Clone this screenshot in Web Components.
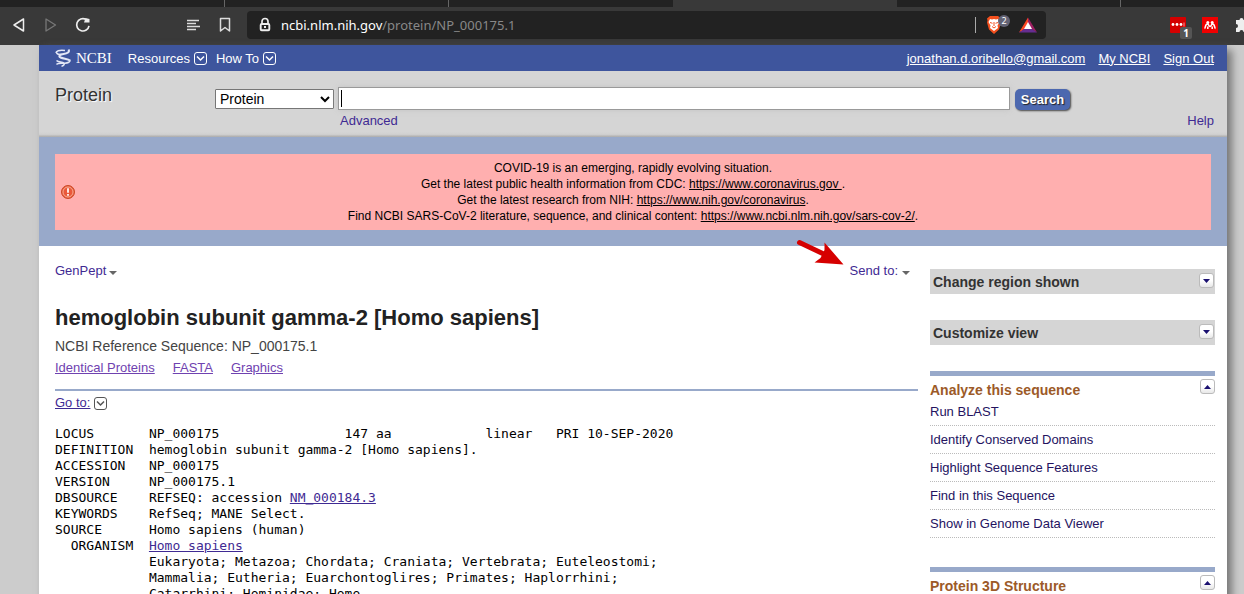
<!DOCTYPE html>
<html lang="en">
<head>
<meta charset="utf-8">
<title>hemoglobin subunit gamma-2 [Homo sapiens] - Protein - NCBI</title>
<style>
  html, body { margin: 0; }
  body { height: 100vh; display: flex; flex-direction: column; overflow: hidden; background: #ccc; font-family: "Liberation Sans", Arial, sans-serif; font-size: 13px; color: #222; }
  browser-bar { flex: none; }
  ncbi-page { flex: 1; min-height: 0; }
</style>
</head>
<body>
<browser-bar></browser-bar>
<ncbi-page>
  <ncbi-header></ncbi-header>
  <ncbi-search></ncbi-search>
  <ncbi-alert></ncbi-alert>
  <protein-record></protein-record>
  <side-panel kind="bar" heading="Change region shown" slot="side"></side-panel>
  <side-panel kind="bar" heading="Customize view" slot="side"></side-panel>
  <side-panel kind="open" heading="Analyze this sequence" slot="side">
    <side-link>Run BLAST</side-link>
    <side-link>Identify Conserved Domains</side-link>
    <side-link>Highlight Sequence Features</side-link>
    <side-link>Find in this Sequence</side-link>
    <side-link>Show in Genome Data Viewer</side-link>
  </side-panel>
  <side-panel kind="open" heading="Protein 3D Structure" slot="side"></side-panel>
</ncbi-page>

<script>
function define(name, html, after) {
  const tpl = document.createElement('template');
  tpl.innerHTML = html;
  customElements.define(name, class extends HTMLElement {
    constructor() {
      super();
      this.attachShadow({ mode: 'open' }).append(tpl.content.cloneNode(true));
    }
    connectedCallback() { if (after) after(this, this.shadowRoot); }
  });
}

define('browser-bar', `
<style>
  :host { display: block; background: #393939; overflow: hidden; }
  .tabs { display: grid; grid-auto-flow: column; grid-auto-columns: 224px; height: 7px; padding-left: 1px; background: #222; }
  .tabs i { border-right: 1px solid #666; }
  .tabs i.quiet { border-color: transparent; }
  .tabs i.on { background: #393939; border-color: #393939; }
  .tools { display: flex; align-items: center; height: 38px; padding: 0 0 2px 3px; box-sizing: border-box; }
  button { flex: none; display: flex; align-items: center; justify-content: center; width: 32px; height: 28px; padding: 0; border: 0; background: none; position: relative; }
  svg { flex: none; display: block; }
  .read { margin-left: 78px; }
  .omni { flex: 1; min-width: 0; display: flex; align-items: center; height: 28px; margin: 0 116px 0 6px; padding: 0 1px 0 10px; background: #222; border-radius: 4px; box-sizing: border-box; }
  .omni button { width: 34px; }
  .url { flex: 1; min-width: 0; margin-left: 8px; white-space: nowrap; overflow: hidden; font: 13px/20px "Noto Sans", sans-serif; color: #888; }
  .url b { font-weight: 400; color: #fff; }
  .sep { width: 1px; height: 16px; background: #aaa; margin-right: 1px; }
  .num { position: absolute; left: 21px; top: 4px; width: 12px; height: 12px; border-radius: 6px; background: #636375; color: #fff; font: 9px/12px "Noto Sans", sans-serif; text-align: center; }
  .one { position: absolute; left: 18px; top: 16px; width: 12px; height: 12px; border-radius: 2px; background: #555; color: #fff; font: bold 10px/12px "Noto Sans", sans-serif; text-align: center; }
  .puzzle { width: 18px; justify-content: flex-start; padding-left: 8px; }
</style>
<div class="tabs"><i></i><i></i><i class="quiet"></i><i class="on"></i><i></i><i></i></div>
<div class="tools">
  <button aria-label="Back"><svg width="14" height="16" viewBox="0 0 14 16"><path d="M11.500 2v12L2 8z" fill="none" stroke="#eee" stroke-width="1.500" stroke-linejoin="round"/></svg></button>
  <button aria-label="Forward"><svg width="14" height="16" viewBox="0 0 14 16"><path d="M2 2v12l9.500-6z" fill="none" stroke="#777" stroke-width="1.300" stroke-linejoin="round"/></svg></button>
  <button aria-label="Reload"><svg width="16" height="16" viewBox="0 0 16 16"><path d="M10.800 2.300A6.200 6.200 0 1 0 14 8.800" fill="none" stroke="#eee" stroke-width="1.700"/><path d="m9 5.500 1.500-4.500 4 1v3.500z" fill="#eee"/></svg></button>
  <button class="read" aria-label="Reader"><svg width="14" height="14" viewBox="0 0 14 14"><path d="M1 2.500h12M1 5.500h9M1 8.500h13M1 11.500h9" stroke="#ddd" stroke-width="1.300"/></svg></button>
  <button aria-label="Bookmark"><svg width="12" height="16" viewBox="0 0 12 16"><path d="M1.500 1.500h9v12.500L6 10.500 1.500 14z" fill="none" stroke="#ddd" stroke-width="1.500" stroke-linejoin="round"/></svg></button>
  <div class="omni">
    <svg width="16" height="16" viewBox="0 0 16 16"><path d="M5 7V4.500a3 3 0 0 1 6 0V7" fill="none" stroke="#eee" stroke-width="1.700"/><rect x="3.700" y="7" width="8.600" height="6.200" rx="1" fill="none" stroke="#eee" stroke-width="1.900"/><rect x="7" y="9" width="2" height="2" fill="#eee"/></svg>
    <div class="url" role="textbox" aria-label="Address"><b>ncbi.nlm.nih.gov</b>/protein/NP_000175.1</div>
    <i class="sep"></i>
    <button aria-label="Shields"><svg width="16" height="18" viewBox="0 0 16 18"><path d="M4 0h8l3 2.500-.5 2 .5 2-2 7L8 18l-5-4.500L1 6.500l.5-2-.5-2z" fill="#f4501e"/><path d="m4 3 2 .5L8 3l2 .5 2-.5 1.500 3-2 3.500.5 2.500L8 15l-4-3 .5-2.500-2-3.500z" fill="#fff"/><path d="m4 6.500 2.500.8M12 6.500l-2.500.8M6 10.500 8 12l2-1.500M8 6v4" stroke="#f4501e" fill="none"/></svg><span class="num">2</span></button>
    <button aria-label="Rewards"><svg width="18" height="16" viewBox="0 0 18 16"><path d="M9 .5 0 15.500l9-5z" fill="#ff4724"/><path d="M9 .5 18 15.500 9 10z" fill="#9e1f63"/><path d="M0 15.500h18l-5-3.500H5z" fill="#662d91"/><path d="m9 5-4 7h8z" fill="#fff"/></svg></button>
  </div>
  <button aria-label="Passwords"><svg width="16" height="16" viewBox="0 0 16 16"><rect width="16" height="16" rx="1" fill="#d40000"/><circle cx="3" cy="7.500" r="1.400" fill="#fff"/><circle cx="7" cy="7.500" r="1.400" fill="#fff"/><circle cx="11" cy="7.500" r="1.400" fill="#fff"/><path d="M14 5.500v4" stroke="#f99"/></svg><span class="one">1</span></button>
  <button aria-label="Mendeley"><svg width="16" height="16" viewBox="0 0 16 16"><rect width="16" height="16" fill="#f00000"/><circle cx="5.800" cy="5.500" r="1.500" fill="#fff"/><circle cx="10.200" cy="5.500" r="1.500" fill="#fff"/><path d="M2.500 11.500c1.200-.5.500-4.500 3-4.500 1.500 0 1 2.500 2.500 2.500S9 7 10.500 7c2.500 0 1.800 4 3 4.500M5.800 9.500v2.500M10.200 9.500v2.500" fill="none" stroke="#fff" stroke-width="1.500"/></svg></button>
  <button class="puzzle" aria-label="Extensions"><svg width="18" height="16" viewBox="0 0 18 16"><path d="M2 3h3.500a2 2 0 0 1 4 0H13v4a2 2 0 0 1 0 4v4H9.500a2 2 0 0 0-4 0H2v-4a2 2 0 0 0 0-4z" fill="#eee"/></svg></button>
</div>`);

define('ncbi-page', `
<style>
  :host { display: block; padding: 0 17px 0 39px; }
  .sheet { background: #fff; min-height: 100%; box-shadow: 5px 5px 8px #777; }
  .cols { display: grid; grid-template-columns: minmax(0, 1fr) 285px; gap: 12px; padding: 0 12px 0 16px; }
  .side { padding-top: 23px; }
  .side ::slotted(*) { margin-bottom: 26px; }
</style>
<div class="sheet">
  <slot name="top"></slot>
  <main class="cols"><slot name="main"></slot><aside class="side"><slot name="side"></slot></aside></main>
</div>`);

define('ncbi-header', `
<style>
  :host { display: flex; align-items: center; height: 26px; padding: 0 13px 0 16px; background: #3e559d; color: #fff; font-size: 13px; }
  a { color: #fff; }
  .logo { display: flex; align-items: center; gap: 4px; margin-right: 16px; font: 15px/24px "Liberation Serif", serif; text-decoration: none; }
  .logo svg { display: block; }
  nav { display: flex; gap: 9px; flex: 1; }
  button { display: flex; align-items: center; gap: 4px; padding: 0; border: 0; background: none; color: #fff; font: inherit; }
  .user { display: flex; gap: 13px; }
</style>
<a class="logo" href="#"><svg width="17" height="18" viewBox="0 0 17 18" fill="none" stroke="#e4e8f6"><path d="M13.500.5c1.500 2.500-1 4-5 4.500C5 5.400 3 7 5.500 8.500 9 10 13 9.500 15 11.500" stroke-width="2"/><path d="M1 4c0-2 3-3.200 9-2.500M1.500 4c1 1.500 3 1.500 5 1.500M15 11c.5 2-2 3-5 3.200-4 .3-7.500-.2-8.500 1.300M1.500 11.500C4 14 7 12 9 14c.8 1.500-.5 3-2.500 3.200" stroke-width="1.500"/></svg>NCBI</a>
<nav>
  <button>Resources <drop-mark></drop-mark></button>
  <button>How To <drop-mark></drop-mark></button>
</nav>
<div class="user"><a href="#">jonathan.d.oribello@gmail.com</a><a href="#">My NCBI</a><a href="#">Sign Out</a></div>`, el => { el.slot = 'top'; });

define('drop-mark', `
<style>:host { display: inline-block; width: 13px; height: 13px; } svg { display: block; }</style>
<svg width="13" height="13" viewBox="0 0 13 13" fill="none" stroke="currentColor"><rect x=".5" y=".5" width="12" height="12" rx="2.500"/><path d="M3 4.500 6.500 8 10 4.500" stroke-width="1.500"/></svg>`);

define('ncbi-search', `
<style>
  :host { display: block; background: linear-gradient(#d5d5d5 92%, #d0d0d0 96%, #aaa); padding: 16px 13px 5px 16px; height: 66px; box-sizing: border-box; }
  form { display: grid; grid-template-columns: 160px 119px minmax(0, 1fr) 55px; align-items: center; width: calc(100% - 144px); }
  h2 { margin: 0; font: 18px/16px "Liberation Sans", sans-serif; color: #333; text-shadow: 1px 1px 1px #fff; align-self: start; }
  select { height: 20px; margin: 0; padding: 0; border: 1px solid #767676; border-radius: 1px; background: #fff; color: #000; font: 14px "Liberation Sans", sans-serif; }
  input { min-width: 0; height: 23px; margin: 0 5px 0 4px; padding: 0 4px; border: 1px solid #999; box-sizing: border-box; background: linear-gradient(#000, #000) 2px 2px / 1px 17px no-repeat #fff; font: 14px "Liberation Sans", sans-serif; box-shadow: 0 0 6px #c4c4c4; }
  button { height: 21px; padding: 0; border: 0; border-radius: 5px; background: #4c68af; color: #fff; font: bold 13px "Liberation Sans", sans-serif; box-shadow: 1px 1px 2px #444; text-shadow: 1px 1px 1px #222; align-self: end; }
  .links { display: flex; justify-content: space-between; padding-left: 285px; line-height: 16px; margin-top: 3px; }
  a { color: #3f2a93; text-decoration: none; }
</style>
<form onsubmit="return false">
  <h2>Protein</h2>
  <select aria-label="Database"><option>Protein</option></select>
  <input type="text" aria-label="Search term">
  <button>Search</button>
</form>
<div class="links"><a href="#">Advanced</a><a href="#">Help</a></div>`, el => { el.slot = 'top'; });

define('ncbi-alert', `
<style>
  :host { display: block; background: #98a9ca; padding: 17px 16px 16px; }
  .box { display: flex; align-items: center; background: #ffafaf; color: #000; padding: 6px 20px 6px 6px; font-size: 12px; line-height: 16px; }
  p { margin: 0; flex: 1; text-align: center; }
  a { color: #000; }
</style>
<div class="box">
  <svg width="14" height="14" viewBox="0 0 14 14"><circle cx="7" cy="7" r="6.500" fill="#e9583a" stroke="#c94a26"/><circle cx="7" cy="7" r="5" fill="none" stroke="#f9c0a8" stroke-width=".8"/><path d="M7 3.200v4.600M7 9v1.700" stroke="#fff" stroke-width="1.700"/></svg>
  <p>COVID-19 is an emerging, rapidly evolving situation.<br>
  Get the latest public health information from CDC: <a href="#">https://www.coronavirus.gov&nbsp;</a>.<br>
  Get the latest research from NIH: <a href="#">https://www.nih.gov/coronavirus</a>.<br>
  Find NCBI SARS-CoV-2 literature, sequence, and clinical content: <a href="#">https://www.ncbi.nlm.nih.gov/sars-cov-2/</a>.</p>
</div>`, el => { el.slot = 'top'; });

define('protein-record', `
<style>
  :host { display: block; padding-top: 17px; }
  .top { display: flex; justify-content: space-between; line-height: 16px; padding-right: 8px; }
  .menu { display: flex; align-items: center; gap: 3px; padding: 0; border: 0; background: none; color: #3f2a93; font: 13px/16px "Liberation Sans", sans-serif; position: relative; }
  .menu i { border: 4px solid transparent; border-top: 4px solid #666; border-bottom: 0; margin-top: 3px; }
  .menu.send { gap: 4px; }
  .pointer { position: absolute; left: -54px; top: -25px; pointer-events: none; }
  h1 { margin: 26px 0 0; font: bold 22px/26px "Liberation Sans", sans-serif; color: #222; }
  .ref { margin: 6px 0 0; font-size: 14px; line-height: 18px; color: #444; }
  .links { display: flex; gap: 18px; line-height: 16px; padding: 5px 0 13px; border-bottom: 2px solid #98a9ca; }
  .links a { color: #6f42b0; }
  .goto { display: flex; align-items: center; gap: 4px; line-height: 16px; padding: 4px 0 15px; color: #555; }
  .goto a, pre a { color: #3f2a93; }
  pre { margin: 0; font: 13px/16px "DejaVu Sans Mono", monospace; color: #000; }
</style>
<div class="top">
  <button class="menu">GenPept<i></i></button>
  <button class="menu send">Send to: <i></i>
    <svg class="pointer" width="50" height="30" viewBox="0 0 50 30" fill="#d60000"><path d="M3.500 4.500 33 18.500" stroke="#d60000" stroke-width="5" stroke-linecap="round"/><path d="M47.500 26.500 28.500 4.500 28.500 12 24.500 20 18.500 24.500z"/></svg>
  </button>
</div>
<h1>hemoglobin subunit gamma-2 [Homo sapiens]</h1>
<p class="ref">NCBI Reference Sequence: NP_000175.1</p>
<div class="links"><a href="#">Identical Proteins</a><a href="#">FASTA</a><a href="#">Graphics</a></div>
<div class="goto"><a href="#">Go to:</a><drop-mark></drop-mark></div>
<pre>LOCUS       NP_000175                147 aa            linear   PRI 10-SEP-2020
DEFINITION  hemoglobin subunit gamma-2 [Homo sapiens].
ACCESSION   NP_000175
VERSION     NP_000175.1
DBSOURCE    REFSEQ: accession <a href="#">NM_000184.3</a>
KEYWORDS    RefSeq; MANE Select.
SOURCE      Homo sapiens (human)
  ORGANISM  <a href="#">Homo sapiens</a>
            Eukaryota; Metazoa; Chordata; Craniata; Vertebrata; Euteleostomi;
            Mammalia; Eutheria; Euarchontoglires; Primates; Haplorrhini;
            Catarrhini; Hominidae; Homo.</pre>`, el => { el.slot = 'main'; });

define('side-panel', `
<style>
  :host { display: block; }
  header { display: flex; justify-content: space-between; align-items: flex-start; }
  h3 { margin: 0; font: bold 14px/17px "Liberation Sans", sans-serif; color: #333; }
  button { width: 15px; height: 15px; padding: 0; border: 1px solid #bbb; border-radius: 3px; background: linear-gradient(#fff 50%, #e8e8e8); display: flex; align-items: center; justify-content: center; }
  button svg { display: block; }
  :host([kind=bar]) header { background: #d5d5d5; height: 25px; padding: 4px 1px 0 3px; box-sizing: border-box; }
  :host([kind=bar]) h3 { line-height: 19px; }
  :host([kind=open]) { border-top: 5px solid #98a9ca; padding-bottom: 3px; }
  :host([kind=open]) header { height: 22px; padding-top: 3px; box-sizing: border-box; }
  :host([kind=open]) h3 { color: #9c5a28; line-height: 22px; }
  :host([kind=open]) button svg { transform: rotate(180deg); }
</style>
<header><h3></h3><button aria-label="Toggle"><svg width="7" height="4" viewBox="0 0 7 4"><path d="M0 0h7L3.500 4z" fill="#1a1070"/></svg></button></header>
<slot></slot>`, (el, root) => { root.querySelector('h3').textContent = el.getAttribute('heading'); });

define('side-link', `
<style>
  :host { display: block; border-bottom: 1px dotted #bbb; line-height: 27px; }
  a { color: #24135f; text-decoration: none; }
</style>
<a href="#"><slot></slot></a>`);
</script>
</body>
</html>
